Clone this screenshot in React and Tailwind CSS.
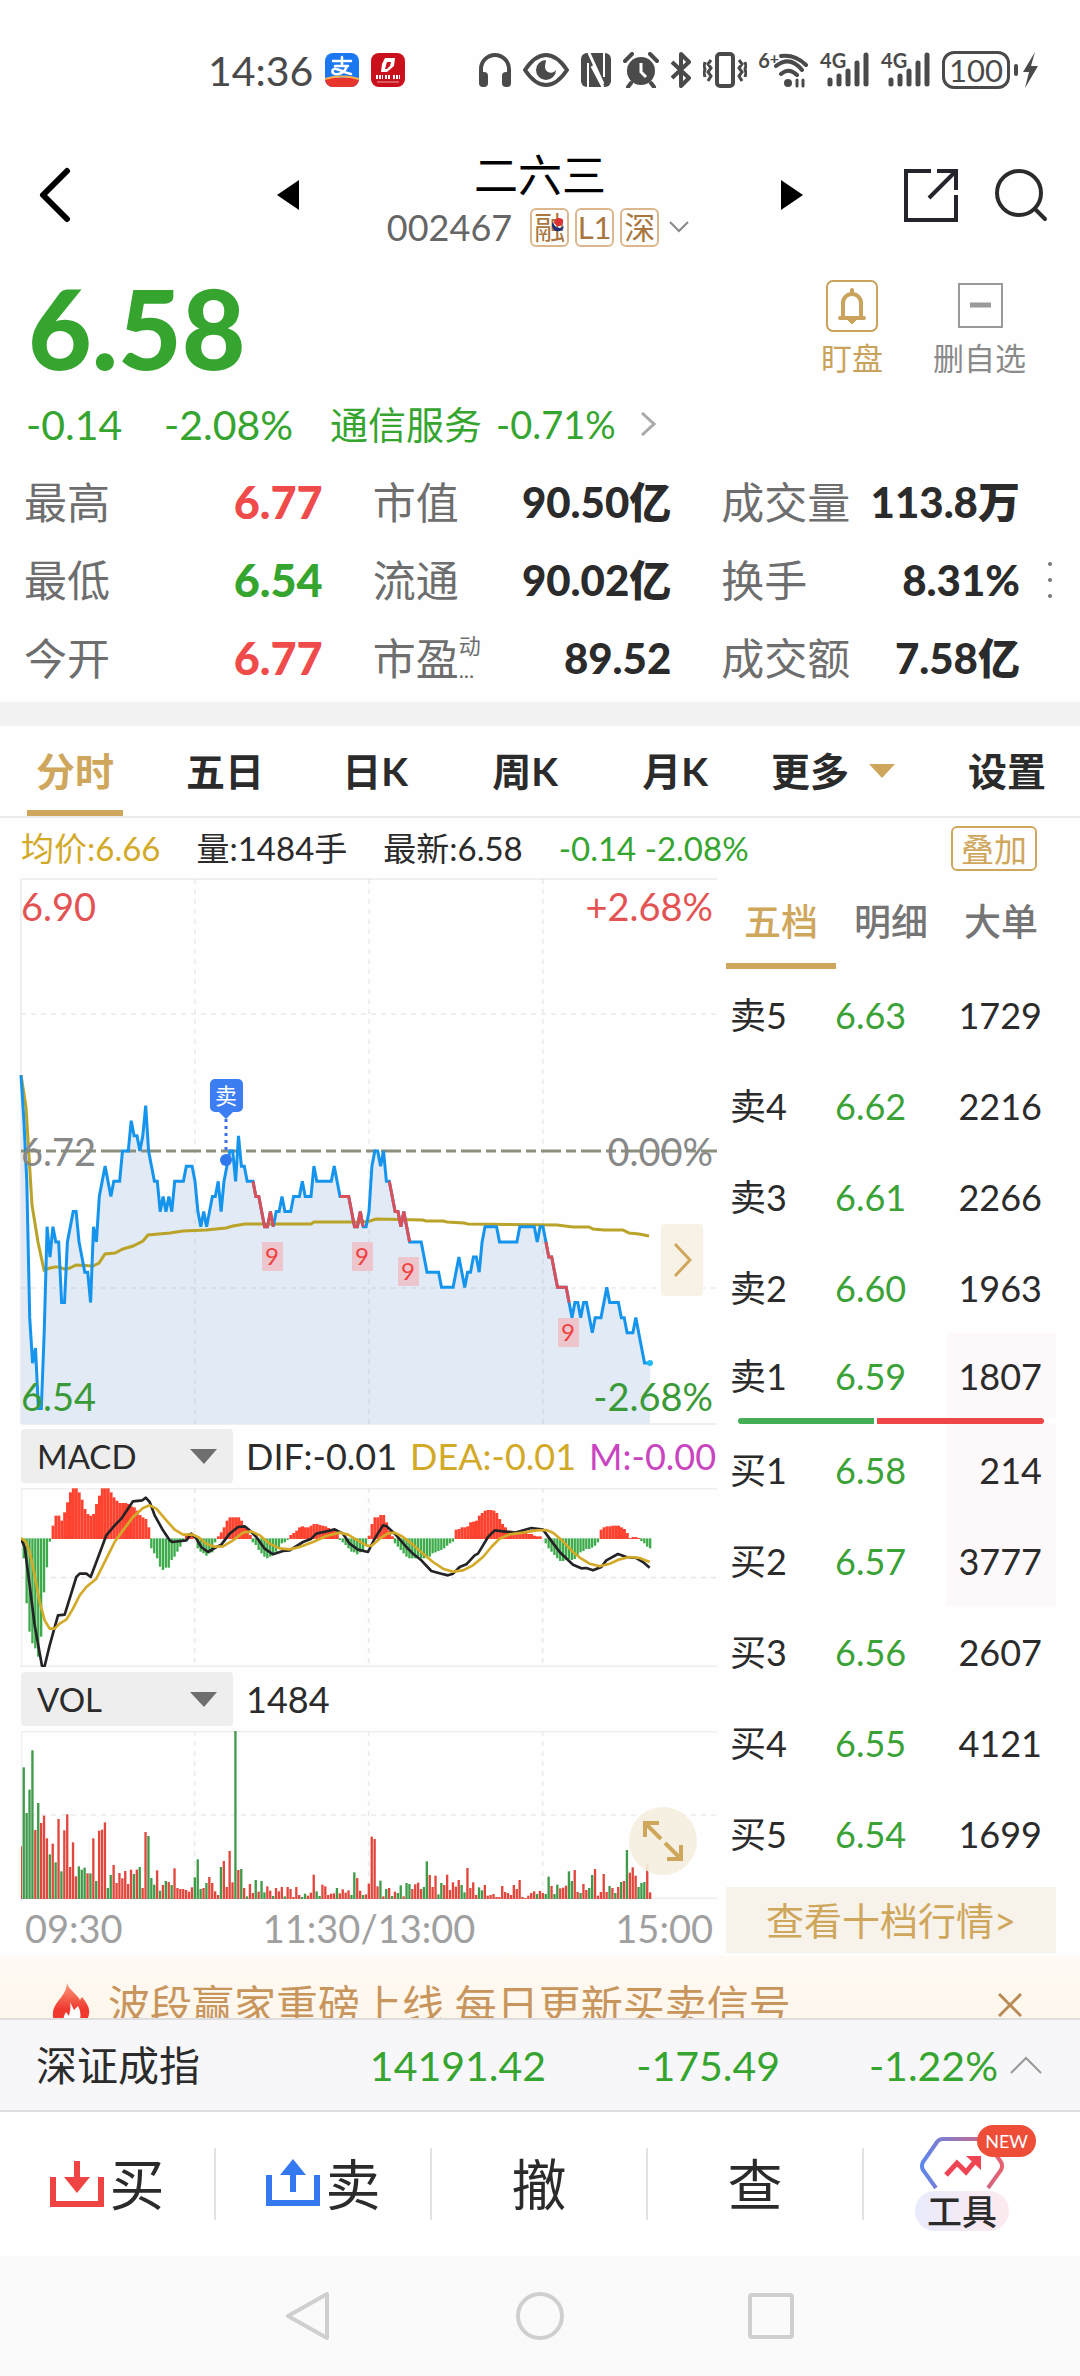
import { useState } from "react";
import clsx from "clsx";

const QUOTES = [
  [
    { label: "最高", value: "6.77", tone: "text-[#f04b4b]" },
    { label: "最低", value: "6.54", tone: "text-[#35a52f]" },
    { label: "今开", value: "6.77", tone: "text-[#f04b4b]" },
  ],
  [
    { label: "市值", value: "90.50亿" },
    { label: "流通", value: "90.02亿" },
    { label: "市盈", value: "89.52", mark: "动" },
  ],
  [
    { label: "成交量", value: "113.8万" },
    { label: "换手", value: "8.31%" },
    { label: "成交额", value: "7.58亿" },
  ],
];

const PERIODS = ["分时", "五日", "日K", "周K", "月K"];
const BOOK_TABS = ["五档", "明细", "大单"];

const SELLS = [
  ["卖5", "6.63", "1729"],
  ["卖4", "6.62", "2216"],
  ["卖3", "6.61", "2266"],
  ["卖2", "6.60", "1963"],
  ["卖1", "6.59", "1807"],
];
const BUYS = [
  ["买1", "6.58", "214"],
  ["买2", "6.57", "3777"],
  ["买3", "6.56", "2607"],
  ["买4", "6.55", "4121"],
  ["买5", "6.54", "1699"],
];

// [minute, cents above the previous close]
const PRICE = [
  [0, 5], [1, 2], [2, -2], [3, -11], [4, -14], [5, -13], [6, -17], [7, -17], [8, -12], [9, -5], [10, -7], [11, -5],
  [12, -6], [13, -6], [14, -10], [15, -10], [16, -6], [18, -4], [19, -4], [20, -6], [22, -8], [23, -8], [24, -10],
  [25, -5], [26, -6], [27, -3], [29, -1], [31, -3], [32, -2], [34, -2], [35, 0], [37, 0], [38, 2], [39, 1], [40, 1],
  [41, 0], [42, 1], [43, 3], [44, 0], [46, -2], [47, -2], [48, -4], [49, -3], [50, -4], [51, -3], [52, -4], [53, -2],
  [56, -2], [57, -1], [59, -1], [60, -2], [61, -4], [62, -5], [63, -4], [64, -5], [66, -3], [67, -3], [68, -2],
  [69, -4], [70, -2], [72, 0], [73, 0], [74, -2], [75, 1], [76, -1], [77, -1], [78, -2], [80, -2], [81, -3], [82, -3],
  [84, -5], [85, -5], [86, -4], [87, -5], [88, -4], [89, -4], [90, -3], [91, -4], [93, -4], [94, -3], [96, -3],
  [97, -2], [98, -3], [100, -3], [101, -1], [102, -2], [107, -2], [108, -1], [110, -3], [113, -3], [115, -5],
  [116, -5], [117, -4], [118, -5], [119, -5], [120, -4], [121, -1], [122, 0], [123, 0], [124, -1], [125, 0],
  [126, -2], [127, -2], [129, -4], [130, -4], [131, -5], [132, -4], [134, -6], [138, -6], [140, -8], [144, -8],
  [145, -9], [149, -9], [151, -7], [153, -9], [154, -8], [155, -8], [156, -7], [157, -7], [158, -8], [159, -6],
  [160, -5], [164, -5], [165, -6], [171, -6], [172, -5], [177, -5], [178, -6], [179, -5], [180, -5], [181, -6],
  [182, -7], [183, -7], [185, -9], [188, -9], [189, -10], [190, -11], [191, -10], [192, -10], [193, -11], [194, -10],
  [195, -10], [197, -12], [198, -11], [200, -11], [202, -9], [203, -10], [206, -10], [207, -11], [208, -11],
  [209, -12], [211, -12], [212, -11], [215, -14], [217, -14],
];
// minutes during which the nine-turn signal is running
const SIGNALS = [[80, 87], [110, 118], [127, 134], [181, 189]];
const NINES = [[241, 363], [331, 363], [377, 378], [537, 439]];

const AVERAGE =
  "0,196 5,228 11,326 17,363 23,391 29,389 34,388 38,388 43,390 49,389 55,386 72,387 78,384 84,375 94,374 102,370 112,367 122,362 127,356 149,354 162,352 185,351 205,349 212,347 224,345 290,345 293,343 342,343 349,342 355,340 402,341 405,342 422,342 426,343 443,344 447,345 536,346 552,348 568,348 572,350 583,351 602,351 608,354 618,355 628,357";

// [first minute, bar heights]
const MACD_BARS = [
  [0, [-5, -60, -195, -280, -315, -330, -355, -295, -162, -87, -10]],
  [11, [40, 70, 70, 55, 80, 110, 140, 152, 152, 140, 118, 90, 75, 70, 75, 105, 130, 152, 152, 152, 140, 125, 115, 108, 108, 108, 105, 98, 95, 85, 72, 65, 60, 35]],
  [45, [-30, -45, -60, -85, -95, -88, -88, -65, -55, -40, -25, -10]],
  [57, [10, 18, 10]],
  [61, [-30, -40, -45, -52, -45, -42, -12]],
  [68, [8, 20, 35, 55, 65, 65, 65, 65, 55, 38, 30, 12]],
  [80, [-12, -20, -35, -45, -55, -60, -55, -45, -40, -30, -15, -12, -5]],
  [93, [12, 18, 25, 35, 38, 35, 35, 40, 45, 45, 42, 40, 38, 33, 30, 25, 15]],
  [110, [-5, -12, -20, -30, -40, -42, -48, -42, -35, -20]],
  [120, [10, 45, 65, 65, 72, 72, 50, 25, 8]],
  [129, [-15, -25, -35, -45, -55, -60, -60, -60, -55, -60, -60, -58, -55, -45, -42, -38, -35, -30, -22, -15, -10]],
  [150, [28, 30, 35, 35, 38, 50, 52, 55, 70, 78, 85, 87, 87, 85, 78, 60, 45, 35, 25, 25, 22, 20, 20, 18, 18, 15, 15, 10, 8, 8]],
  [181, [-15, -30, -40, -50, -60, -68, -68, -65, -62, -65, -62, -52, -42, -38, -32, -32, -28, -22, -12]],
  [200, [28, 35, 38, 38, 40, 40, 40, 35, 30, 18, 3, 6, 6, 3]],
  [214, [-8, -15, -25, -30]],
];
const DIF =
  "64,360 75,385 90,500 105,620 127,742 135,742 150,680 175,590 195,588 230,475 240,465 260,465 273,475 290,430 320,350 345,320 365,300 400,248 428,245 438,237 450,250 465,290 490,335 510,365 518,370 560,365 575,345 590,360 605,385 625,400 645,388 665,378 690,345 715,325 735,323 750,335 770,355 795,390 820,407 850,397 870,395 910,370 935,360 950,345 985,337 1005,332 1030,345 1050,375 1075,393 1105,400 1125,360 1150,320 1160,322 1190,350 1220,385 1240,405 1265,425 1295,457 1325,465 1345,470 1360,465 1380,445 1400,437 1425,410 1435,405 1450,380 1465,355 1485,335 1545,342 1595,328 1630,333 1650,360 1680,400 1720,438 1745,449 1760,448 1780,455 1805,445 1820,425 1855,406 1880,415 1910,418 1930,430 1950,447";
const DEA =
  "64,358 78,368 90,400 105,470 120,550 135,605 150,630 165,630 180,615 200,603 220,570 240,530 260,505 290,480 320,420 345,370 370,335 400,295 430,268 450,260 470,270 500,305 525,333 550,348 580,348 600,358 620,375 645,384 670,383 700,365 730,342 755,338 780,350 810,375 840,389 870,392 900,385 940,370 980,352 1020,342 1045,348 1070,363 1100,380 1115,382 1140,360 1165,344 1185,342 1210,355 1240,378 1270,405 1300,430 1330,450 1360,459 1390,455 1420,440 1450,415 1475,385 1500,360 1530,347 1570,342 1610,335 1640,334 1660,342 1690,368 1720,400 1745,420 1770,435 1800,443 1830,435 1860,422 1890,415 1920,418 1950,430";

// rising minutes are positive, falling ones negative
const VOLUME = [
  158, -395, -258, -328, -446, 207, -288, 228, 250, 182, -134, 166, -110, 240, -83, 206, 254, 96, 170, 68, -98, -88,
  -94, 77, -77, 182, -54, 205, 208, 230, -33, -72, 102, 48, 78, 62, 84, 45, 88, -75, 88, -96, 33, 201, -189, -63, -43,
  86, -25, 42, -54, 51, -42, 92, 33, 30, 30, 27, 22, 35, -65, -119, -30, 33, -48, 66, 48, 23, 12, -96, 114, 36, 144,
  50, -504, 87, -90, 33, -8, 45, 18, -57, 22, -54, -20, 38, 25, -9, 33, 23, 36, -8, 36, 30, 6, 36, 12, -6, -16, 10,
  19, 73, -23, -9, 43, 38, 12, 16, 17, -33, 17, 29, 19, 26, -12, -80, 63, 25, -12, 14, 46, 187, 180, 38, -55, 8, -30,
  33, -9, 22, -18, -41, 8, -48, -45, 30, 44, 49, 30, -36, -113, 72, 36, 70, -14, -48, 42, 73, 27, 50, 37, 57, -42,
  -20, 93, 33, 50, 12, -35, -26, 42, 10, 12, 15, 6, 6, 39, 21, 18, 12, 42, 30, 57, 6, 3, 10, 18, 23, -15, 24, 18,
  -15, -67, 39, -15, -43, 32, 34, 40, -83, -54, 87, 21, -18, 45, 27, -33, -72, 90, 10, 21, 75, 21, -39, 33, -18, 36,
  -51, 54, -147, 79, 95, 70, -36, -48, -51, 107, 20,
];

const toPoints = (rows) => rows.map(([m, c]) => `${m * 2.9},${272 - c * 15.15}`).join(" ");

function MobileSignal() {
  return (
    <div className="relative">
      <svg className="h-9 w-[50px]" viewBox="0 0 50 36" fill="none" stroke="#4a4a4a" strokeWidth="5" strokeLinecap="round">
        <path d="M10 28v4M19 24v8M28 19v13M37 11v21M46 3v29" />
      </svg>
      <span className="absolute left-0 -top-1 text-[20px] font-bold leading-6">4G</span>
    </div>
  );
}

function StatusBar() {
  return (
    <div className="flex h-[140px] items-center justify-between pl-[208px] pr-[42px] text-[#4a4a4a]">
      <div className="flex items-center gap-3">
        <span className="text-[41px]">14:36</span>
        <svg className="size-[34px]" viewBox="0 0 34 34">
          <rect width="34" height="34" rx="8" fill="#1b78f2" />
          <path d="M0 25h34v1a8 8 0 0 1-8 8H8a8 8 0 0 1-8-8z" fill="#e8362e" />
          <path d="M0 26q17-5 34 0" stroke="#ffb04a" strokeWidth="2" fill="none" />
          <g stroke="#fff" strokeWidth="2.5" fill="none" strokeLinecap="round">
            <path d="M8 8h18M17 4v9M10 13h13M22 13c-2 6-7 9-12 8-4-1-3-6 1-5 5 1 9 4 15 5" />
          </g>
        </svg>
        <svg className="size-[34px]" viewBox="0 0 34 34">
          <rect width="34" height="34" rx="8" fill="#c9101c" />
          <path d="M14 5h10l-1 8-7 6h-6l1-8z" fill="#fff" />
          <path d="M16 9h4l-1 4-3 3h-2z" fill="#c9101c" />
          <path d="M5 24h7M14 24h6M22 24h7" stroke="#fff" strokeWidth="4" strokeDasharray="2 1" />
          <path d="M6 29h22" stroke="#fff" strokeOpacity="0.6" strokeWidth="1" />
        </svg>
      </div>
      <div className="flex items-center gap-[11px]">
        <svg className="h-9 w-[34px]" viewBox="0 0 34 36">
          <path d="M3 24V17a14 14 0 0 1 28 0v7" stroke="#4a4a4a" strokeWidth="4" fill="none" />
          <rect x="1" y="20" width="9" height="15" rx="4" fill="#4a4a4a" />
          <rect x="24" y="20" width="9" height="15" rx="4" fill="#4a4a4a" />
        </svg>
        <svg className="h-9 w-[46px]" viewBox="0 0 46 36">
          <path d="M2 18Q12 3 23 3t21 15Q34 33 23 33T2 18z" fill="none" stroke="#4a4a4a" strokeWidth="4" />
          <path d="M23 8a10 10 0 1 0 10 10 6 6 0 0 1-11-3c0-3 1-5 1-7z" fill="#4a4a4a" />
        </svg>
        <svg className="h-9 w-8" viewBox="0 0 32 36">
          <path d="M7 1h18a6 6 0 0 1 6 6v22a6 6 0 0 1-6 6H7a6 6 0 0 1-6-6V7a6 6 0 0 1 6-6z" fill="#4a4a4a" />
          <path d="M8 36V11M24 0v25" stroke="#fff" strokeWidth="2" />
          <path d="M9 1l14 31M12 14l11 21" stroke="#fff" strokeWidth="3" />
        </svg>
        <svg className="h-9 w-9" viewBox="0 0 36 36">
          <circle cx="18" cy="19" r="14" fill="#4a4a4a" />
          <path d="M2 9l7-7M34 9l-7-7M8 31l-3 4M28 31l3 4" stroke="#4a4a4a" strokeWidth="4" strokeLinecap="round" />
          <path d="M18 11v9l5 5" stroke="#fff" strokeWidth="3" fill="none" />
        </svg>
        <svg className="h-9 w-[22px]" viewBox="0 0 22 36">
          <path d="M2 10l17 16-8 8V2l8 8L2 26" stroke="#4a4a4a" strokeWidth="4" fill="none" strokeLinejoin="round" />
        </svg>
        <svg className="h-9 w-11" viewBox="0 0 44 36" fill="none" stroke="#4a4a4a">
          <rect x="14" y="2" width="16" height="32" rx="3" strokeWidth="4" />
          <path d="M8 8l-3 4 3 4-3 4 3 4-3 5M2 10l-1 4 1 3-1 4 1 4M36 8l3 4-3 4 3 4-3 4 3 5M42 10l1 4-1 3 1 4-1 4" strokeWidth="3" />
        </svg>
        <div className="flex">
          <span className="-mt-1 text-[20px] font-bold leading-6">6<sup className="-top-1 text-[16px]">+</sup></span>
          <svg className="-ml-2 h-9 w-[38px]" viewBox="0 0 38 36" fill="none" stroke="#4a4a4a" strokeWidth="4" strokeLinecap="round">
            <path d="M10 4q14-2 25 9M5 14q14-11 26 4M10 22q8-7 16 1" />
            <circle cx="17" cy="31" r="4" fill="#4a4a4a" stroke="none" />
            <path d="M26 28v6M32 28v6" strokeWidth="3" />
          </svg>
        </div>
        <MobileSignal />
        <MobileSignal />
        <div className="flex items-center gap-1">
          <span className="flex h-[38px] items-center rounded-xl border-[3px] border-[#4a4a4a] px-1 text-[31px]">100</span>
          <span className="h-3 w-1 rounded bg-[#4a4a4a]" />
          <svg className="h-9 w-4" viewBox="0 0 16 36">
            <path d="M13 0L1 20h6L3 36 16 14H9z" fill="#4a4a4a" />
          </svg>
        </div>
      </div>
    </div>
  );
}

function Tag({ children }) {
  return (
    <span className="relative flex size-[39px] items-center justify-center rounded-md border-2 border-[#dcb78e] text-[31px] text-[#a8763e]">
      {children}
    </span>
  );
}

function Header() {
  return (
    <header className="flex h-[110px] items-center justify-between pl-9 pr-8">
      <div className="flex items-center gap-[205px]">
        <button aria-label="返回">
          <svg className="h-14 w-9" viewBox="0 0 36 56" fill="none" stroke="#000" strokeWidth="6" strokeLinecap="round" strokeLinejoin="round">
            <path d="M31 4L7 28l24 24" />
          </svg>
        </button>
        <button aria-label="上一只">
          <svg className="h-[30px] w-[22px]" viewBox="0 0 22 30"><path d="M22 0v30L0 15z" /></svg>
        </button>
      </div>
      <div className="flex flex-col items-center pt-2">
        <h1 className="text-[44px] leading-[56px]">二六三</h1>
        <div className="flex h-12 items-center gap-[6px] pr-1">
          <span className="mr-3 text-[36px] text-[#666]">002467</span>
          <Tag>
            融
            <svg className="absolute right-0 top-1 size-5" viewBox="0 0 20 20">
              <path d="M7 9a5 5 0 0 1 9-3 5 5 0 0 1-6 6z" fill="#d33" />
              <path d="M6 8a6 6 0 1 0 11 4c-3 3-9 3-11-4z" fill="#1f2f7a" />
            </svg>
          </Tag>
          <Tag>L1</Tag>
          <Tag>深</Tag>
          <svg className="ml-1 h-3 w-5" viewBox="0 0 20 12" fill="none" stroke="#888" strokeWidth="2"><path d="M1 1l9 9 9-9" /></svg>
        </div>
      </div>
      <div className="flex items-center gap-[101px]">
        <button aria-label="下一只">
          <svg className="h-[30px] w-[22px]" viewBox="0 0 22 30"><path d="M0 0v30l22-15z" /></svg>
        </button>
        <div className="flex items-center gap-9">
          <button aria-label="分享">
            <svg className="size-[54px]" viewBox="0 0 54 54" fill="none" stroke="#23242c" strokeWidth="4">
              <path d="M27 3H2v49h50V27M33 3h19v19M52 3L25 30" />
            </svg>
          </button>
          <button aria-label="搜索">
            <svg className="size-[54px]" viewBox="0 0 54 54" fill="none" stroke="#2b2b2b" strokeWidth="4" strokeLinecap="round">
              <circle cx="25" cy="25" r="22" />
              <path d="M41 41l10 10" />
            </svg>
          </button>
        </div>
      </div>
    </header>
  );
}

function Summary() {
  return (
    <section className="pt-[14px]">
      <div className="flex h-[125px] justify-between pl-7 pr-[54px]">
        <p className="text-[110px] font-black leading-[126px] text-[#35a52f]">6.58</p>
        <div className="flex gap-[50px] pt-4 text-[31px] leading-10">
          <button className="flex flex-col items-center gap-[6px] text-[#c9a35b]">
            <svg className="size-[52px]" viewBox="0 0 52 52" fill="none" stroke="currentColor">
              <rect x="1" y="1" width="50" height="50" rx="6" strokeWidth="2" />
              <path d="M14 38h24M17 37V23a9 9 0 0 1 18 0v14M26 10v4" strokeWidth="4" strokeLinecap="round" />
              <path d="M22 40h8l-4 4z" fill="currentColor" />
            </svg>
            盯盘
          </button>
          <button className="flex flex-col items-center gap-[6px] text-[#8a8a8a]">
            <svg className="size-[52px]" viewBox="0 0 52 52" fill="none" stroke="#9a9a9a">
              <rect x="5" y="4" width="43" height="43" strokeWidth="2" />
              <path d="M16 25h21" strokeWidth="5" />
            </svg>
            删自选
          </button>
        </div>
      </div>
      <div className="mb-1 flex h-[70px] items-center pl-[26px] text-[41px] text-[#35a52f]">
        <span className="w-[138px]">-0.14</span>
        <span className="w-[166px]">-2.08%</span>
        <a href="#sector" className="flex items-center text-[38px]">
          通信服务
          <span className="ml-[14px]">-0.71%</span>
          <svg className="ml-6 h-6 w-4" viewBox="0 0 16 24" fill="none" stroke="#aaa" strokeWidth="3"><path d="M2 1l12 11L2 23" /></svg>
        </a>
      </div>
      <div className="flex items-center justify-between pb-[5px] pl-6 pr-7">
        <div className="grid flex-1 grid-cols-3 gap-x-[50px] pr-7">
          {QUOTES.map((col) => (
            <dl key={col[0].label}>
              {col.map((q) => (
                <div key={q.label} className="flex h-[78px] items-center justify-between whitespace-nowrap">
                  <dt className="flex items-center text-[43px] text-[#6e6e6e]">
                    {q.label}
                    {q.mark && (
                      <span className="flex flex-col text-[22px] leading-6">
                        <span>{q.mark}</span>
                        <span>...</span>
                      </span>
                    )}
                  </dt>
                  <dd className={clsx("font-black", q.tone ? "text-[45px]" : "text-[42px] text-[#2b2b2b]", q.tone)}>{q.value}</dd>
                </div>
              ))}
            </dl>
          ))}
        </div>
        <button aria-label="更多指标" className="flex flex-col gap-3">
          <span className="size-1 rounded-full bg-[#777]" />
          <span className="size-1 rounded-full bg-[#777]" />
          <span className="size-1 rounded-full bg-[#777]" />
        </button>
      </div>
    </section>
  );
}

function PeriodTabs() {
  const [active, setActive] = useState("分时");
  return (
    <nav className="flex h-[92px] items-stretch justify-between border-b-2 border-[#ebebeb] pl-[27px] pr-[34px] text-[39px] font-bold text-[#2b2b2b]">
      <div className="flex gap-[54px]">
        {PERIODS.map((p) => (
          <button
            key={p}
            onClick={() => setActive(p)}
            className={clsx("w-24 border-y-[6px] border-t-transparent", active === p ? "border-b-[#cfa75c] text-[#cfa75c]" : "border-b-transparent")}
          >
            {p}
          </button>
        ))}
        <button className="-ml-[6px] flex items-center gap-5">
          更多
          <svg className="h-[14px] w-[26px]" viewBox="0 0 26 14"><path d="M0 0h26L13 14z" fill="#cfa75c" /></svg>
        </button>
      </div>
      <button>设置</button>
    </nav>
  );
}

function PriceChart() {
  return (
    <svg className="block h-auto w-full overflow-visible" viewBox="0 0 696 545" fill="none">
      <path d="M0 0H696M0 545H696M0 0V545" stroke="#f0eef0" strokeWidth="2" />
      <polygon points={`0,545 ${toPoints(PRICE)} 629,545`} fill="#e1eaf5" />
      <path d="M174 0V545M348 0V545M522 0V545M0 135H696M0 409H696" stroke="#999" strokeOpacity="0.15" strokeWidth="2" strokeDasharray="5 5" />
      <path d="M0 272H696" stroke="#8b8f7c" strokeWidth="3" strokeDasharray="20 5 10 5" />
      <polyline points={AVERAGE} stroke="#b9a329" strokeWidth="3" />
      <polyline points={toPoints(PRICE)} stroke="#1594ee" strokeWidth="3" />
      {SIGNALS.map(([from, to]) => (
        <polyline key={from} points={toPoints(PRICE.filter(([m]) => m >= from && m <= to))} stroke="#dc4f58" strokeWidth="3" />
      ))}
      <circle cx="629" cy="484" r="3" fill="#1fbcf0" />
      {NINES.map(([x, y]) => (
        <g key={x}>
          <rect x={x} y={y} width="21" height="29" fill="#ecc5cd" />
          <text x={x + 10} y={y + 23} textAnchor="middle" fontSize="24" fill="#f04040">9</text>
        </g>
      ))}
      <path d="M205 240V272" stroke="#3f6fe8" strokeWidth="3" strokeDasharray="3 4" />
      <circle cx="205" cy="281" r="6" fill="#2f78f0" />
      <path d="M194 200h23a5 5 0 0 1 5 5v23a5 5 0 0 1-5 5h-5l-7 7-7-7h-4a5 5 0 0 1-5-5v-23a5 5 0 0 1 5-5z" fill="#3d7df2" />
      <text x="205" y="225" textAnchor="middle" fontSize="22" fill="#fff">卖</text>
      <g fontSize="38">
        <text x="0" y="42" fill="#e35353">6.90</text>
        <text x="0" y="287" fill="#888">6.72</text>
        <text x="0" y="532" fill="#3a9a37">6.54</text>
        <g textAnchor="end">
          <text x="692" y="42" fill="#e35353">+2.68%</text>
          <text x="692" y="287" fill="#888">0.00%</text>
          <text x="692" y="532" fill="#3a9a37">-2.68%</text>
        </g>
      </g>
    </svg>
  );
}

function MacdChart() {
  return (
    <svg className="block h-auto w-full" viewBox="64 208 2088 537" fill="none">
      <path d="M64 210H2152M64 743H2152M65 208V745" stroke="#eee" strokeWidth="5" />
      <path d="M585 208V745M1107 208V745M1629 208V745M64 477H2152" stroke="#ebe7eb" strokeWidth="5" strokeDasharray="15 15" />
      {MACD_BARS.map(([start, bars]) =>
        bars.map((v, i) => (
          <rect
            key={start + i}
            x={60 + (start + i) * 8.7}
            y={v > 0 ? 361 - v : 359}
            width={v > 0 ? 9 : 7}
            height={Math.abs(v)}
            fill={v > 0 ? "#fd432f" : "#3dab4b"}
          />
        ))
      )}
      <polyline points={DIF} stroke="#242428" strokeWidth="8" strokeLinejoin="round" />
      <polyline points={DEA} stroke="#d3a928" strokeWidth="8" strokeLinejoin="round" />
    </svg>
  );
}

function VolumeChart() {
  return (
    <svg className="block h-auto w-full" viewBox="64 186 2088 504">
      <path d="M64 188H2152M64 688H2152M65 186V690" stroke="#eee" strokeWidth="5" />
      <path d="M585 186V690M1107 186V690M1629 186V690M64 438H2152" stroke="#ebebeb" strokeWidth="5" strokeDasharray="15 15" />
      {VOLUME.map((v, i) => (
        <rect
          key={i}
          x={60 + i * 8.7}
          y={690 - Math.abs(v)}
          width="7"
          height={Math.abs(v)}
          fill={v > 0 ? "#e2473d" : "#3f9b4a"}
        />
      ))}
    </svg>
  );
}

function IndicatorSelect({ label, options }) {
  return (
    <div className="relative w-[212px] shrink-0">
      <select aria-label={label} className="h-[54px] w-full appearance-none rounded-sm bg-[#eeeeee] pl-4 text-[33px] text-[#2b2b2b]">
        {options.map((o) => (
          <option key={o}>{o}</option>
        ))}
      </select>
      <svg className="pointer-events-none absolute right-4 top-5 h-4 w-[27px]" viewBox="0 0 27 16">
        <path d="M0 0h27L14 15z" fill="#6e6e6e" />
      </svg>
    </div>
  );
}

function Charts() {
  return (
    <div className="min-w-0">
      <div className="relative">
        <PriceChart />
        <button aria-label="展开" className="absolute right-[14px] top-[345px] flex h-[72px] w-[42px] items-center justify-center rounded bg-[#f8f2e6]">
          <svg className="h-9 w-5" viewBox="0 0 20 36" fill="none" stroke="#cfa75c" strokeWidth="3"><path d="M3 2l15 16L3 34" /></svg>
        </button>
      </div>
      <div className="flex h-16 items-center gap-[13px] text-[36px] whitespace-nowrap">
        <IndicatorSelect label="副图指标" options={["MACD", "KDJ"]} />
        <span className="text-[#2b2b2b]">DIF:-0.01</span>
        <span className="text-[#d3a928]">DEA:-0.01</span>
        <span className="text-[#c945c0]">M:-0.00</span>
      </div>
      <MacdChart />
      <div className="flex h-16 items-center gap-[13px] text-[36px]">
        <IndicatorSelect label="成交量指标" options={["VOL", "MACD"]} />
        <span className="text-[#2b2b2b]">1484</span>
      </div>
      <div className="relative">
        <VolumeChart />
        <button aria-label="全屏" className="absolute right-[20px] top-[76px] flex size-[68px] items-center justify-center rounded-full bg-[#f5eee0]/90">
          <svg className="size-11" viewBox="0 0 44 44" fill="none" stroke="#cfa75c" strokeWidth="4">
            <path d="M4 18V4h14M4 4l16 16M40 26v14H26M40 40L24 24" />
          </svg>
        </button>
      </div>
      <div className="flex h-[57px] items-center justify-between px-1 text-[38px] text-[#a0a0a0]">
        <span>09:30</span>
        <span>11:30/13:00</span>
        <span>15:00</span>
      </div>
    </div>
  );
}

function BookRows({ rows, lit }) {
  return rows.map(([name, price, volume], i) => (
    <tr key={name} className="h-[91px] [&.best]:h-[85px]">
      <td className="w-[109px] pl-1">{name}</td>
      <td className="text-[#3aa237]">{price}</td>
      <td className={clsx("w-[109px] pr-[14px] text-right", lit.includes(i) && "bg-[#fdf8f9]")}>{volume}</td>
    </tr>
  ));
}

function OrderBook() {
  const [tab, setTab] = useState("五档");
  return (
    <div className="min-w-0">
      <div className="flex h-[90px] text-[37px] font-medium text-[#757575]">
        {BOOK_TABS.map((t) => (
          <button
            key={t}
            onClick={() => setTab(t)}
            className={clsx("flex-1 border-b-[6px]", tab === t ? "border-[#cfa75c] text-[#cfa75c]" : "border-transparent")}
          >
            {t}
          </button>
        ))}
      </div>
      <table className="w-full text-[36px] text-[#2b2b2b]">
        <tbody className="[&>tr:last-child]:h-[85px]"><BookRows rows={SELLS} lit={[4]} /></tbody>
      </table>
      <div className="flex gap-[3px] px-3">
        <span className="h-[6px] grow-[45] rounded-l-full bg-[#44ad56]" />
        <span className="h-[6px] grow-[55] rounded-r-full bg-[#ee4646]" />
      </div>
      <table className="w-full text-[36px] text-[#2b2b2b]">
        <tbody><BookRows rows={BUYS} lit={[0, 1]} /></tbody>
      </table>
      <button className="mt-2 h-[66px] w-full bg-[#f7f2ea] text-[38px] text-[#cfa75c]">查看十档行情&gt;</button>
    </div>
  );
}

function Banner() {
  return (
    <div className="h-[62px] overflow-hidden bg-gradient-to-b from-[#fffbf4] to-[#fdf6ec]">
      <div className="flex h-[98px] items-center pl-[52px] pr-[58px] text-[42px] text-[#c8955c]">
        <svg className="mr-[18px] h-11 w-[38px]" viewBox="0 0 38 44">
          <defs>
            <linearGradient id="flame" x1="0" x2="0" y1="0" y2="1">
              <stop offset="0" stopColor="#fb9a7a" />
              <stop offset="0.6" stopColor="#f0382f" />
            </linearGradient>
          </defs>
          <path d="M15 0c2 7 9 10 13 17l2-3c5 6 8 11 7 17-1 7-7 12-13 13H12C5 42 0 38 1 30 2 18 14 14 15 0z" fill="url(#flame)" />
          <path d="M18 19l4 8 4-4c4 7 3 15-2 21H14c-4-5-3-10 0-15l3 4c1-5 2-9 1-14z" fill="#fff" />
        </svg>
        <span className="flex-1 whitespace-nowrap">波段赢家重磅上线 每日更新买卖信号</span>
        <button aria-label="关闭">
          <svg className="size-6" viewBox="0 0 24 24" stroke="#b98a55" strokeWidth="3"><path d="M1 1l22 22M23 1L1 23" /></svg>
        </button>
      </div>
    </div>
  );
}

function IndexBar() {
  return (
    <div className="flex h-[94px] items-center border-y-2 border-[#dedee0] bg-[#f7f7f9] pl-9 pr-[38px] text-[41px] text-[#35a52f]">
      <span className="flex-1 text-[#2b2b2b]">深证成指</span>
      <span className="w-[234px] text-right">14191.42</span>
      <span className="w-[234px] text-right">-175.49</span>
      <span className="w-[218px] text-right">-1.22%</span>
      <svg className="ml-3 h-[18px] w-8" viewBox="0 0 32 18" fill="none" stroke="#999" strokeWidth="2"><path d="M1 17L16 2l15 15" /></svg>
    </div>
  );
}

function TradeBar() {
  return (
    <div className="grid h-[144px] grid-cols-5 items-center bg-white text-[55px] text-[#2b2b2b]">
      <button className="flex h-[72px] items-center justify-center gap-1 border-r-2 border-[#e2e2e2]">
        <svg className="h-[50px] w-14" viewBox="0 0 56 50" fill="none" stroke="#ee4444" strokeWidth="6">
          <path d="M4 18v27h48V18M28 2v24" />
          <path d="M15 18h26L28 34z" fill="#ee4444" stroke="none" />
        </svg>
        买
      </button>
      <button className="flex h-[72px] items-center justify-center gap-1 border-r-2 border-[#e2e2e2]">
        <svg className="h-[50px] w-14" viewBox="0 0 56 50" fill="none" stroke="#3579f0" strokeWidth="6">
          <path d="M4 16v28h48V16M28 10v23" />
          <path d="M15 16h26L28 0z" fill="#3579f0" stroke="none" />
        </svg>
        卖
      </button>
      <button className="flex h-[72px] items-center justify-center border-r-2 border-[#e2e2e2]">撤</button>
      <button className="flex h-[72px] items-center justify-center border-r-2 border-[#e2e2e2]">查</button>
      <button className="relative flex flex-col items-center pr-5">
        <svg className="h-[54px] w-[84px]" viewBox="0 0 84 54" fill="none">
          <defs>
            <linearGradient id="hex" x1="0" x2="1">
              <stop offset="0" stopColor="#5f86ee" />
              <stop offset="1" stopColor="#e8606e" />
            </linearGradient>
          </defs>
          <path d="M16 51L3 33q-2-4 0-8L17 5q2-3 6-3h38q4 0 6 3l14 20q2 4 0 8L68 51" stroke="url(#hex)" strokeWidth="4" />
          <path d="M26 38l11-12 9 9 11-13" stroke="#ee4453" strokeWidth="5" />
          <path d="M46 19h15v14z" fill="#ee4453" />
        </svg>
        <span className="rounded-full bg-gradient-to-r from-[#e9ebfc] to-[#fdeaee] px-3 text-[35px] font-medium leading-10">工具</span>
        <span className="absolute right-11 -top-3 rounded-full bg-[#ee4e38] px-2 text-[18px] leading-8 text-white">NEW</span>
      </button>
    </div>
  );
}

function SystemNav() {
  return (
    <div className="flex h-[120px] items-center justify-center gap-[184px] bg-[#fafafa]">
      <button aria-label="后退">
        <svg className="size-12" viewBox="0 0 48 48" fill="none" stroke="#cfcfcf" strokeWidth="4" strokeLinejoin="round"><path d="M43 2v44L4 24z" /></svg>
      </button>
      <button aria-label="主页">
        <svg className="size-12" viewBox="0 0 48 48" fill="none" stroke="#cfcfcf" strokeWidth="4"><circle cx="24" cy="24" r="22" /></svg>
      </button>
      <button aria-label="任务">
        <svg className="size-12" viewBox="0 0 48 48" fill="none" stroke="#cfcfcf" strokeWidth="4"><rect x="2" y="3" width="42" height="42" rx="2" /></svg>
      </button>
    </div>
  );
}

export default function App() {
  return (
    <div className="min-h-screen bg-[#fefefe] font-[Lato,'Noto_Sans_CJK_SC',sans-serif] leading-none">
      <StatusBar />
      <Header />
      <Summary />
      <div className="h-6 bg-[#f2f2f2]" />
      <PeriodTabs />
      <div className="flex h-[61px] items-center gap-9 pl-[21px] pr-[43px] text-[33px] text-[#2b2b2b] whitespace-nowrap">
        <span className="text-[#d3a928]">均价:6.66</span>
        <span>量:1484手</span>
        <span>最新:6.58</span>
        <span className="flex-1 text-[#35a52f]">-0.14 -2.08%</span>
        <button className="h-[45px] rounded-md border-2 border-[#cfa75c] px-2 leading-10 text-[#cfa75c]">叠加</button>
      </div>
      <div className="grid grid-cols-[696fr_330fr] gap-[9px] pl-[21px] pr-6">
        <Charts />
        <OrderBook />
      </div>
      <Banner />
      <IndexBar />
      <TradeBar />
      <SystemNav />
    </div>
  );
}
